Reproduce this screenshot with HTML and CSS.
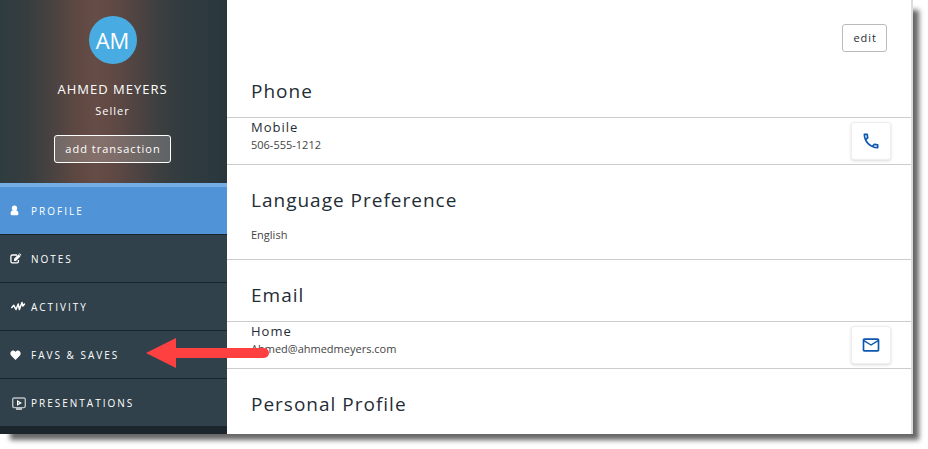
FILE: index.html
```html
<!DOCTYPE html>
<html lang="en">
<head>
    <meta charset="UTF-8">
    <meta name="viewport" content="width=device-width, initial-scale=1.0">
    <title>Ahmed Meyers</title>
    <link rel="stylesheet" href="styles.css">
</head>
<body>
    <div class="window">
        <aside class="sidebar">
            <div class="person">
                <div class="avatar">AM</div>
                <div class="name">AHMED MEYERS</div>
                <div class="role">Seller</div>
                <button type="button" class="btn btn-ghost">add transaction</button>
            </div>
            <nav class="menu">
                <a href="#profile" class="active">
                    <svg class="icon" viewBox="0 0 16 16"><path fill="#fff" d="M4.500 2.500c1.800 0 2.700 1.200 2.700 2.800 0 .9-.4 1.700-1 2.200C7.900 7.700 8.400 9 8.400 10.800c0 .9-.5 1.400-1.200 1.400H1.800c-.7 0-1.200-.5-1.200-1.400C.6 9 1.100 7.700 2.800 7.500c-.6-.5-1-1.300-1-2.200 0-1.600.9-2.800 2.700-2.800z"/></svg>
                    PROFILE
                </a>
                <a href="#notes">
                    <svg class="icon" viewBox="0 0 16 16"><path fill="none" stroke="#fff" stroke-width="1.300" d="M7 4H2.300Q.9 4 .9 5.400V10.400Q.9 11.800 2.300 11.800H7Q8.400 11.800 8.400 10.400V9"/><path fill="#fff" d="M4 7.800l4.500-4.500 2 2L6 9.900H4zM9 2.800l.7-.6 1.700 1.800-.6.700z"/></svg>
                    NOTES
                </a>
                <a href="#activity">
                    <svg class="icon" viewBox="0 0 16 16"><path fill="none" stroke="#fff" stroke-width="1.500" stroke-linejoin="round" stroke-linecap="round" d="M1.800 8.500l2-2.200 2.200 4.200 2.200-5.500 1.200 5.500 2.600-7 .9 3.500 1.600-2"/></svg>
                    ACTIVITY
                </a>
                <a href="#favs">
                    <svg class="icon" viewBox="0 0 16 16"><path fill="#fff" d="M5.500 13L1.300 8.800C-.6 6.800.6 3.600 3.100 3.600c1.100 0 1.900.6 2.400 1.400.5-.8 1.300-1.400 2.400-1.400 2.500 0 3.700 3.200 1.800 5.200z"/></svg>
                    FAVS &amp; SAVES
                    <svg class="arrow" viewBox="0 0 123 30"><path fill="#ff4040" d="M0 15L30 0V10H118a5 5 0 0 1 0 10H30V30z"/></svg>
                </a>
                <a href="#presentations">
                    <svg class="icon" viewBox="0 0 16 16"><rect x="2.700" y="3" width="12.600" height="9.600" rx="1.500" fill="none" stroke="#b9c0c4" stroke-width="1.400"/><path fill="#b9c0c4" d="M6 13h6v2H6z"/><path fill="none" stroke="#fff" stroke-width="1.200" d="M7.600 6v3.800l3.200-1.900z"/></svg>
                    PRESENTATIONS
                </a>
            </nav>
        </aside>

        <main class="content">
            <div class="toolbar">
                <button type="button" class="btn">edit</button>
            </div>

            <section>
                <h2>Phone</h2>
                <div class="row">
                    <div>
                        <div class="label">Mobile</div>
                        <div class="value">506-555-1212</div>
                    </div>
                    <button type="button" class="action" aria-label="Call">
                        <svg viewBox="0 0 24 24"><path fill="#0d57b0" d="M6.540 5c.06.89.21 1.760.45 2.590l-1.200 1.200c-.41-1.200-.67-2.470-.76-3.790h1.510m9.860 12.020c.85.24 1.720.39 2.600.45v1.490c-1.320-.09-2.590-.35-3.800-.75l1.200-1.190M7.500 3H4c-.55 0-1 .45-1 1 0 9.390 7.610 17 17 17 .55 0 1-.45 1-1v-3.490c0-.55-.45-1-1-1-1.240 0-2.450-.2-3.570-.57a.84.84 0 0 0-.31-.05c-.26 0-.51.1-.71.29l-2.200 2.200a15.150 15.150 0 0 1-6.590-6.590l2.200-2.200c.28-.28.36-.67.25-1.020A11.360 11.360 0 0 1 8.500 4c0-.55-.45-1-1-1z"/></svg>
                    </button>
                </div>
            </section>

            <section class="ruled">
                <h2>Language Preference</h2>
                <div class="value">English</div>
            </section>

            <section>
                <h2>Email</h2>
                <div class="row">
                    <div>
                        <div class="label">Home</div>
                        <div class="value">Ahmed@ahmedmeyers.com</div>
                    </div>
                    <button type="button" class="action" aria-label="Send email">
                        <svg viewBox="0 0 24 24"><path fill="#0d57b0" d="M22 6c0-1.100-.9-2-2-2H4c-1.100 0-2 .9-2 2v12c0 1.100.9 2 2 2h16c1.100 0 2-.9 2-2V6zm-2 0l-8 5-8-5h16zm0 12H4V8l8 5 8-5v10z"/></svg>
                    </button>
                </div>
            </section>

            <section>
                <h2>Personal Profile</h2>
            </section>
        </main>
    </div>
</body>
</html>
```
FILE: styles.css
```css
* {
    box-sizing: border-box;
}
body {
    font-family: 'Open Sans', 'Noto Sans', sans-serif;
    background-color: #fff;
    color: #1f2d36;
    margin: 0;
}
.window {
    display: flex;
    min-height: calc(100vh - 15px);
    margin: 0 15px 15px 0;
    background-color: #fff;
    border-right: 2px solid #dcdcdc;
    box-shadow: 8px 8px 5px -2px rgba(0, 0, 0, 0.6);
}

/* sidebar */
.sidebar {
    position: relative;
    flex: 0 0 227px;
    background-color: #1a262c;
    color: #fff;
}
.person {
    display: flex;
    flex-direction: column;
    align-items: center;
    padding: 16px 2px 20px 0;
    background: linear-gradient(to right, #2e3c40 0%, #363d3f 12%, #4b4341 24%, #5f4842 34%, #664c46 42%, #604944 50%, #4f4442 60%, #3c3f40 70%, #303b3f 82%, #29373c 100%);
}
.avatar {
    width: 48px;
    height: 48px;
    line-height: 48px;
    border-radius: 50%;
    background-color: #48ace3;
    font-size: 22px;
    text-align: center;
}
.name {
    margin-top: 15px;
    font-size: 13px;
    line-height: 20px;
    letter-spacing: 1px;
}
.role {
    font-size: 11px;
    line-height: 24px;
    letter-spacing: 1px;
}
.btn {
    height: 28px;
    padding: 0 9px 1px 10px;
    border: 1px solid #bbb;
    border-radius: 3px;
    background-color: #fff;
    color: #1f2d36;
    font-family: inherit;
    font-size: 11px;
    letter-spacing: 1px;
    cursor: pointer;
}
.btn-ghost {
    margin-top: 12px;
    border-color: #fff;
    background-color: rgba(255, 255, 255, 0.2);
    color: #fff;
}
.menu {
    border-top: 4px solid #74aee5;
}
.menu a {
    position: relative;
    display: flex;
    align-items: center;
    gap: 5px;
    height: 48px;
    padding-left: 10px;
    border-bottom: 1px solid #1a262c;
    background-color: #30414c;
    color: #fff;
    font-size: 10px;
    font-weight: 500;
    letter-spacing: 2px;
    text-decoration: none;
}
.menu a.active {
    background-color: #5094d7;
}
.icon {
    width: 16px;
    height: 16px;
}
.arrow {
    position: absolute;
    left: 146px;
    top: 7px;
    width: 123px;
    height: 30px;
    z-index: 1;
}

/* details */
.content {
    flex: 1;
}
.toolbar {
    display: flex;
    justify-content: flex-end;
    padding: 24px 24px 4px;
}
h2 {
    margin: 0;
    padding: 21px 24px 12px;
    font-size: 19px;
    line-height: 28px;
    font-weight: 400;
    letter-spacing: 1px;
}
.row {
    display: flex;
    justify-content: space-between;
    padding-right: 20px;
    border-top: 1px solid #ccc;
    border-bottom: 1px solid #ccc;
}
.label {
    padding: 0 24px;
    font-size: 13px;
    line-height: 18px;
    letter-spacing: 1px;
}
.value {
    padding: 0 24px;
    font-size: 11px;
    line-height: 18px;
    color: #444;
}
.ruled {
    padding-bottom: 15px;
    border-bottom: 1px solid #ccc;
}
.action {
    display: flex;
    align-items: center;
    justify-content: center;
    width: 40px;
    height: 38px;
    margin: 4px 0;
    padding: 0;
    border: 1px solid #eee;
    border-radius: 3px;
    background-color: #fff;
    box-shadow: 0 1px 3px rgba(0, 0, 0, 0.15);
    cursor: pointer;
}
.action svg {
    width: 20px;
    height: 20px;
}
```
